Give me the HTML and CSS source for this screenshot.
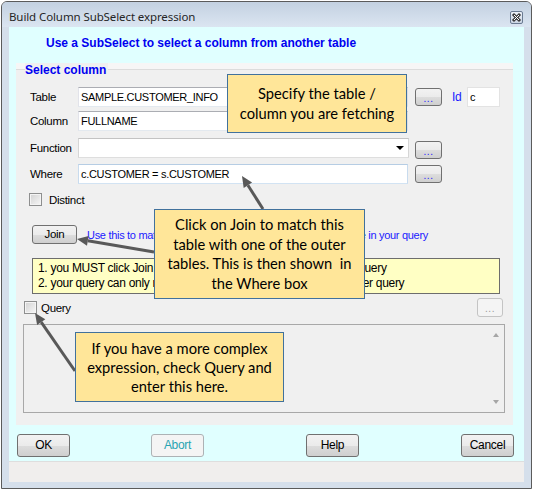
FILE: index.html
```html
<!DOCTYPE html>
<html>
<head>
<meta charset="utf-8">
<link rel="stylesheet" href="styles.css">
</head>
<body>
<div class="window">
  <div class="titlebar">
    <span class="title">Build Column SubSelect expression</span>
    <span class="close">
      <svg width="13" height="13" viewBox="0 0 13 13">
        <defs>
          <linearGradient id="cg" x1="0" y1="0" x2="0" y2="1">
            <stop offset="0" stop-color="#eef2f8"/>
            <stop offset="1" stop-color="#c9d4e3"/>
          </linearGradient>
        </defs>
        <rect x="0.5" y="0.5" width="12" height="12" rx="1.5" fill="url(#cg)" stroke="#6a7b92"/>
        <path d="M4 4 L9 9 M9 4 L4 9" stroke="#3b3b3b" stroke-width="3" stroke-linecap="square"/>
        <path d="M4 4 L9 9 M9 4 L4 9" stroke="#ffffff" stroke-width="1"/>
      </svg>
    </span>
  </div>
  <div class="client">
    <div class="header">Use a SubSelect to select a column from another table</div>
    <div class="panel">
      <div class="caption"><span class="caption-text">Select column</span><span class="caption-line"></span></div>
      <div class="row r-table">
        <span class="lbl">Table</span>
        <div class="field">SAMPLE.CUSTOMER_INFO</div>
        <div class="dots">...</div>
        <span class="id-lbl">Id</span>
        <div class="field id-field">c</div>
      </div>
      <div class="row r-column">
        <span class="lbl">Column</span>
        <div class="field">FULLNAME</div>
      </div>
      <div class="row r-function">
        <span class="lbl">Function</span>
        <div class="field select"><span class="caret"></span></div>
        <div class="dots">...</div>
      </div>
      <div class="row r-where">
        <span class="lbl">Where</span>
        <div class="field where">c.CUSTOMER = s.CUSTOMER</div>
        <div class="dots">...</div>
      </div>
      <div class="check-row distinct"><span class="chk"></span><span class="chk-lbl">Distinct</span></div>
      <div class="join-row">
        <div class="btn join">Join</div>
        <span class="hint">Use this to match the columns of this subselect with the table in your query</span>
      </div>
      <div class="note">
        <div>1. you MUST click Join to link this subselect query to your outer query</div>
        <div>2. your query can only return one column for every row of the outer query</div>
      </div>
      <div class="query-row">
        <span class="chk"></span><span class="chk-lbl q-lbl">Query</span>
        <div class="dots dots-disabled">...</div>
      </div>
      <div class="query-box">
        <div class="scroll"><span class="sc-up"></span><span class="sc-down"></span></div>
      </div>
    </div>
    <div class="buttons">
      <div class="btn big ok">OK</div>
      <div class="btn big abort">Abort</div>
      <div class="btn big help">Help</div>
      <div class="btn big cancel">Cancel</div>
    </div>
    <div class="status"></div>
  </div>
</div>

<svg class="arrows" width="533" height="491" viewBox="0 0 533 491">
  <g stroke="#595959" stroke-width="3" fill="none">
    <line x1="263" y1="209" x2="247.9" y2="185.3"/>
    <line x1="154" y1="252" x2="87.8" y2="240.8"/>
    <line x1="75" y1="371" x2="41.2" y2="322.1"/>
  </g>
  <g fill="#595959">
    <polygon points="242,176 252.1,182.6 243.7,188.0"/>
    <polygon points="77,239 88.6,235.9 87.0,245.7"/>
    <polygon points="35,313 45.3,319.3 37.1,324.9"/>
  </g>
</svg>

<div class="callout c1">Specify the table /<br>column you are fetching</div>
<div class="callout c2">Click on Join to match this<br>table with one of the outer<br>tables. This is then shown&nbsp; in<br>the Where box</div>
<div class="callout c3">If you have a more complex<br>expression, check Query and<br>enter this here.</div>
</body>
</html>
```

FILE: styles.css
```css
* { box-sizing: border-box; }

body {
  margin: 0;
  width: 533px;
  height: 491px;
  overflow: hidden;
  position: relative;
  background: #ffffff;
  font-family: "Liberation Sans", Arial, sans-serif;
}

.window {
  margin: 1px 0 0 1px;
  width: 531px;
  height: 488px;
  border: 1px solid #5b5b5b;
  border-radius: 6px 6px 0 0;
  background: #d5dfeb;
  padding: 0 7px 6px 7px;
  display: flex;
  flex-direction: column;
}

.titlebar {
  margin: 0 -7px;
  height: 25px;
  flex: none;
  background: linear-gradient(#c3d1e1, #dbe5f1);
  border-radius: 5px 5px 0 0;
  display: flex;
  align-items: flex-start;
  justify-content: space-between;
  padding: 0 8px 0 7px;
}

.title {
  margin-top: 7px;
  font-family: "Noto Sans", "Liberation Sans", sans-serif;
  font-size: 11.5px;
  line-height: 16px;
  color: #262626;
  letter-spacing: -0.1px;
}

.close {
  margin-top: 9px;
  width: 13px;
  height: 13px;
  display: block;
}
.close svg { display: block; }

.client {
  flex: 1;
  background: #e0ffff;
  display: flex;
  flex-direction: column;
}

.header {
  height: 36px;
  flex: none;
  padding: 9px 0 0 37px;
  font-size: 12px;
  line-height: 14px;
  font-weight: bold;
  color: #0000f0;
}

.panel {
  margin-left: 7px;
  width: 497px;
  height: 362px;
  flex: none;
  background: #f0f0f0;
  display: flex;
  flex-direction: column;
  font-size: 11px;
  letter-spacing: -0.3px;
  color: #000;
}

.caption {
  height: 14px;
  display: flex;
  align-items: center;
  padding-left: 9px;
  padding-right: 1px;
  background: linear-gradient(#f6f6f6 0, #f6f6f6 6px, #dcdcdc 6px, #dcdcdc 7px, #f0f0f0 7px);
}
.caption-text {
  font-size: 12px;
  font-weight: bold;
  color: #0000f0;
  letter-spacing: 0;
  line-height: 14px;
  background: #f0f0f0;
  padding-right: 2px;
}
.caption-line { flex: 1; }

.row {
  height: 20px;
  display: flex;
  align-items: center;
  padding-left: 14px;
}
.r-table { margin-top: 10px; }
.r-column { margin-top: 4px; }
.r-function { margin-top: 7px; }
.r-where { margin-top: 6px; }

.lbl {
  width: 48px;
  flex: none;
  font-size: 11.5px;
}

.field {
  width: 330px;
  height: 20px;
  flex: none;
  background: #fff;
  border: 1px solid;
  border-color: #abadb3 #dbdfe6 #e3e9ef #e2e3ea;
  padding-left: 2px;
  line-height: 18px;
  white-space: nowrap;
  overflow: hidden;
}
.field.where { border-color: #b6cde4 #c8dbee #d2e3f3 #c8dbee; }
.field.select {
  width: 331px;
  display: flex;
  align-items: center;
  justify-content: flex-end;
  padding-right: 4px;
  border-color: #c3c3c3 #d6d6d6 #dedede #d6d6d6;
}
.caret {
  width: 0;
  height: 0;
  border-left: 4px solid transparent;
  border-right: 4px solid transparent;
  border-top: 4px solid #000;
}

.dots {
  width: 27px;
  height: 18px;
  flex: none;
  margin-left: 7px;
  border: 1px solid #707070;
  border-radius: 3px;
  background: linear-gradient(#f2f2f2 0%, #ebebeb 50%, #dddddd 51%, #cfcfcf 100%);
  color: #1a1aff;
  font-size: 10px;
  line-height: 10px;
  text-align: center;
  padding-top: 5px;
  letter-spacing: 0.5px;
}
.r-function .dots { margin-left: 6px; align-self: flex-start; margin-top: 3px; }
.r-where .dots { align-self: flex-start; margin-top: 1px; }

.id-lbl {
  margin-left: 10px;
  width: 15px;
  color: #1a1aff;
  font-size: 12px;
}
.id-field {
  width: 33px;
  border-color: #e3e3e3;
}

.check-row {
  display: flex;
  align-items: center;
  height: 13px;
}
.distinct { margin-top: 9px; padding-left: 13px; }

.chk {
  width: 13px;
  height: 13px;
  flex: none;
  border: 1px solid #8e8f8f;
  background: linear-gradient(135deg, #d2d2d2, #f7f7f7);
  box-shadow: inset 0 0 0 1px #f4f4f4;
}
.chk-lbl { margin-left: 7px; font-size: 11.5px; }

.join-row {
  margin-top: 19px;
  height: 19px;
  display: flex;
  align-items: center;
  padding-left: 16px;
}

.btn {
  border: 1px solid #707070;
  border-radius: 3px;
  background: linear-gradient(#f2f2f2 0%, #ebebeb 50%, #dddddd 51%, #cfcfcf 100%);
  text-align: center;
  color: #000;
  font-size: 11.5px;
}
.join {
  width: 45px;
  height: 19px;
  line-height: 17px;
}
.hint {
  margin-left: 10px;
  color: #1a1aff;
  white-space: nowrap;
}

.note {
  margin: 14px 0 0 16px;
  width: 468px;
  height: 36px;
  background: #ffffc4;
  border: 1px solid #6d6d6d;
  padding: 2px 5px;
  font-size: 12px;
  line-height: 15px;
  white-space: nowrap;
  overflow: hidden;
}

.query-row {
  margin-top: 4px;
  height: 19px;
  display: flex;
  align-items: center;
  padding-left: 8px;
  padding-right: 10px;
}
.q-lbl { margin-left: 4px; }
.dots-disabled {
  margin-left: auto;
  width: 26px;
  height: 19px;
  border-color: #c4c4c4;
  background: #f4f4f4;
  color: #9a9a9a;
}

.query-box {
  margin: 7px 0 0 7px;
  width: 482px;
  height: 89px;
  border: 1px solid #a8a8a8;
  background: #f0f0f0;
  display: flex;
  justify-content: flex-end;
}
.scroll {
  width: 17px;
  display: flex;
  flex-direction: column;
  justify-content: space-between;
  align-items: center;
  padding: 8px 0 8px;
}
.sc-up, .sc-down {
  width: 0;
  height: 0;
  border-left: 3.5px solid transparent;
  border-right: 3.5px solid transparent;
}
.sc-up { border-bottom: 4px solid #a6a6a6; }
.sc-down { border-top: 4px solid #a6a6a6; }

.buttons {
  margin-top: 9px;
  height: 23px;
  flex: none;
  display: flex;
  padding-left: 8px;
}
.big {
  width: 53px;
  height: 23px;
  line-height: 21px;
  font-size: 12px;
  letter-spacing: -0.3px;
}
.abort {
  margin-left: 81px;
  background: #f4f4f4;
  border-color: #adb2b5;
  color: #27a4b2;
}
.help { margin-left: 102px; }
.cancel { margin-left: 102px; }

.status {
  margin-top: 4px;
  height: 21px;
  flex: none;
  background: #f0eeed;
  border-top: 1px solid #dedede;
}

.arrows {
  position: absolute;
  left: 0;
  top: 0;
  pointer-events: none;
}

.callout {
  position: absolute;
  background: #ffe699;
  border: 1px solid #41719c;
  font-family: Lato, "Open Sans", sans-serif;
  font-size: 14.7px;
  line-height: 19.5px;
  color: #000;
  text-align: center;
  display: flex;
  align-items: center;
  justify-content: center;
  white-space: nowrap;
}
.c1 { left: 227px; top: 74px; width: 180px; height: 59px; }
.c2 { left: 154px; top: 209px; width: 211px; height: 90px; }
.c3 { left: 75px; top: 332px; width: 209px; height: 70px; line-height: 19px; }
```
